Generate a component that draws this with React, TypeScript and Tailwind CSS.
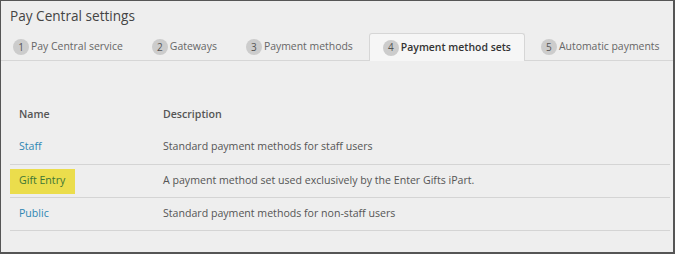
const tabs = [
  { n: 1, label: "Pay Central service" },
  { n: 2, label: "Gateways" },
  { n: 3, label: "Payment methods" },
  { n: 4, label: "Payment method sets", active: true },
  { n: 5, label: "Automatic payments" },
];

const rows = [
  { name: "Staff", description: "Standard payment methods for staff users" },
  {
    name: "Gift Entry",
    description: "A payment method set used exclusively by the Enter Gifts iPart.",
    highlight: true,
  },
  { name: "Public", description: "Standard payment methods for non-staff users" },
];

export default function App() {
  return (
    <div
      className="h-[254px] w-[675px] overflow-hidden border-t border-l border-r-2 border-b-2 border-[#555] bg-[#eeeeee] text-[#555]"
      style={{ fontFamily: '"Open Sans", sans-serif' }}
    >
      <h1 className="pl-[9px] pt-[5px] text-[13.6px] leading-[20px] text-[#444]">
        Pay Central settings
      </h1>

      <ul className="-ml-px mt-[7px] flex items-end gap-[3px] border-b border-[#d6d6d6]">
        {tabs.map((tab) => (
          <Tab key={tab.n} {...tab} />
        ))}
      </ul>

      <table className="ml-[9px] mt-[37px] w-[660px] border-collapse text-[10.6px]">
        <thead>
          <tr className="h-[33px]">
            <th className="w-[153px] pl-[9px] text-left font-semibold text-[#555]">Name</th>
            <th className="text-left font-semibold text-[#555]">Description</th>
          </tr>
        </thead>
        <tbody>
          {rows.map((row) => (
            <tr key={row.name} className="h-[33px] border-b border-[#d4d4d4]">
              <td className="relative pl-[9px]">
                {row.highlight && (
                  <span className="absolute left-0 top-[4px] h-[25px] w-[65px] bg-[#ebdd4c]" />
                )}
                <a
                  className="relative cursor-pointer text-[#2f86b3]"
                  style={row.highlight ? { color: "#3d7636" } : undefined}
                >
                  {row.name}
                </a>
              </td>
              <td className="text-[#555]">{row.description}</td>
            </tr>
          ))}
        </tbody>
      </table>
    </div>
  );
}

function Tab({ n, label, active }: { n: number; label: string; active?: boolean }) {
  return (
    <li
      className={
        "-mb-px flex h-[28px] items-center gap-[2px] whitespace-nowrap px-[13px] text-[10.45px] " +
        (active
          ? "rounded-t-[3px] border border-b-0 border-[#d6d6d6] bg-[#f6f6f6] font-semibold text-[#333]"
          : "text-[#666]")
      }
    >
      <span className="flex h-[16px] w-[16px] items-center justify-center rounded-full bg-[#cccccc] text-[10px] font-normal text-[#555]">
        {n}
      </span>
      {label}
    </li>
  );
}
